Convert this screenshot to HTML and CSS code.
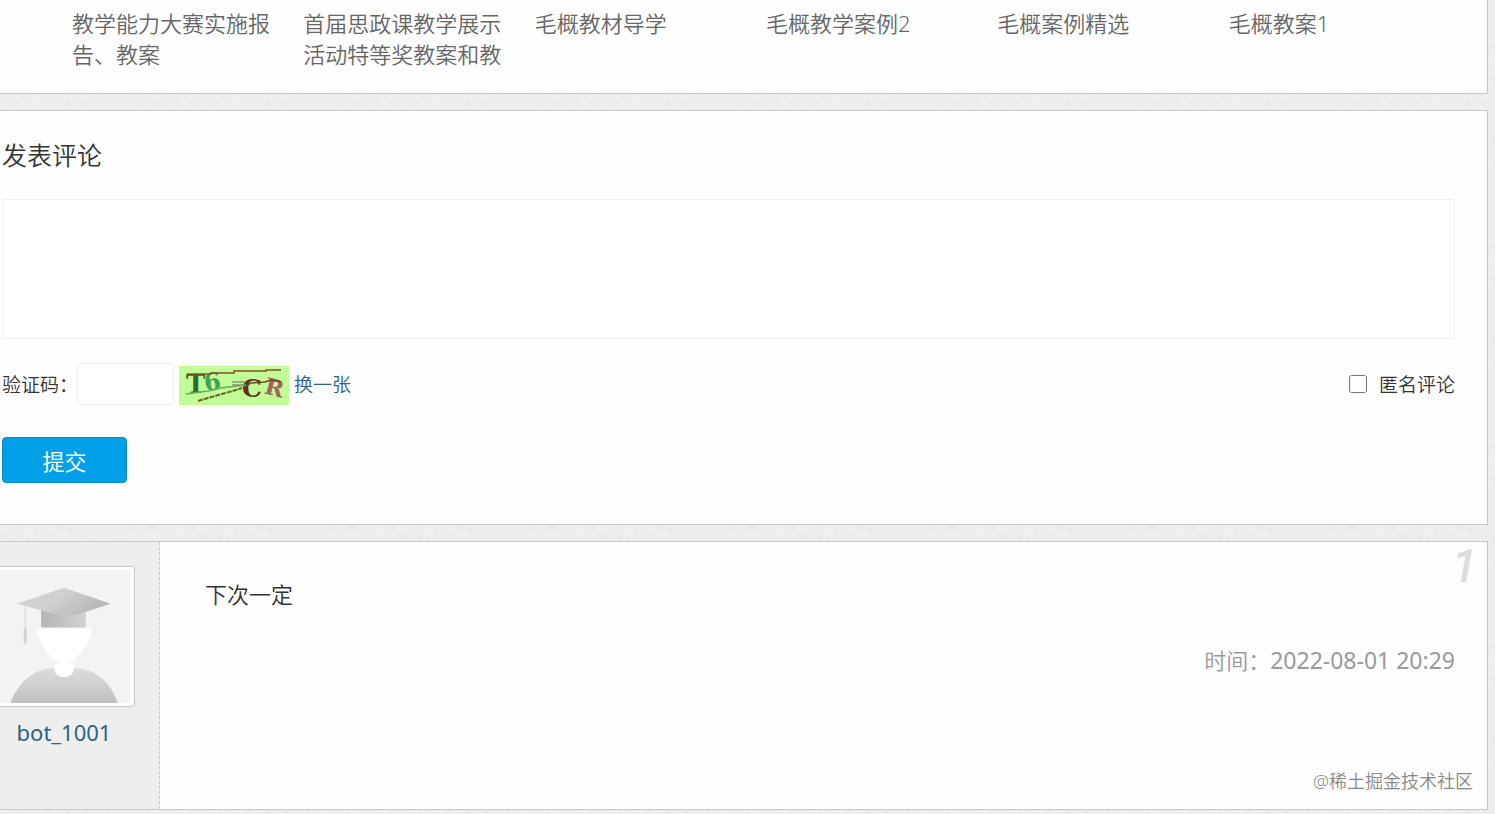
FILE: index.html
```
<!DOCTYPE html>
<html lang="zh-CN">
<head>
  <meta charset="UTF-8">
  <meta name="viewport" content="width=device-width, initial-scale=1.0">
  <title>发表评论</title>
  <link rel="stylesheet" href="styles.css">
</head>
<body>
  <section class="panel related">
    <a href="#">教学能力大赛实施报告、教案</a>
    <a href="#">首届思政课教学展示活动特等奖教案和教</a>
    <a href="#">毛概教材导学</a>
    <a href="#">毛概教学案例2</a>
    <a href="#">毛概案例精选</a>
    <a href="#">毛概教案1</a>
  </section>

  <form class="panel comment-form">
    <h2><label for="content">发表评论</label></h2>
    <textarea id="content" name="content"></textarea>
    <div class="form-row">
      <label for="captcha">验证码：</label>
      <input type="text" class="captcha-input" id="captcha" name="captcha">
      <svg class="captcha" viewBox="0 0 110 39" width="110" height="39">
        <rect width="110" height="39" fill="#c1fc96"/>
        <g font-family="DejaVu Serif, serif" font-weight="bold">
          <text x="7" y="27" font-size="26" fill="#2c6b2b">T</text>
          <text x="25" y="24" font-size="24" fill="#3fa056" transform="rotate(-8 34 16)">6</text>
          <text x="63" y="31" font-size="25" fill="#60301c">C</text>
          <text x="86" y="30" font-size="23" fill="#a4635d" transform="rotate(14 96 22)">R</text>
        </g>
        <g fill="none" stroke-width="1.5">
          <path d="M8 8 L32 8 L32 7 L55 7 L55 5 L87 5 L87 4 L102 4" stroke="#8d4b2c"/>
          <path d="M19 35 L29 32 L43 28 L57 24 L63 22" stroke="#6f6224" stroke-width="2" stroke-dasharray="5 1"/>
          <path d="M65 21 L72 17 L86 16 L92 14 L102 16" stroke="#6f4224"/>
          <path d="M7 28 L29 25 L42 22 L67 19" stroke="#66ad6b"/>
          <path d="M53 16 L67 16 M53 19 L65 19" stroke="#82986b"/>
        </g>
      </svg>
      <a href="#">换一张</a>
      <span class="anonymous">
        <input type="checkbox" id="anonymous" name="anonymous">
        <label for="anonymous">匿名评论</label>
      </span>
    </div>
    <button type="submit">提交</button>
  </form>

  <article class="panel comment">
    <div class="user">
      <svg class="avatar" viewBox="0 0 134 134">
        <defs>
          <linearGradient id="cap" x1="0" y1="0" x2="1" y2="0.4">
            <stop offset="0" stop-color="#d2d2d2"/>
            <stop offset="0.5" stop-color="#d0d0d0"/>
            <stop offset="1" stop-color="#b8b8b8"/>
          </linearGradient>
          <linearGradient id="band" x1="0" y1="0" x2="1" y2="0">
            <stop offset="0" stop-color="#b5b5b5"/>
            <stop offset="1" stop-color="#d2d2d2"/>
          </linearGradient>
          <linearGradient id="gown" x1="0" y1="0" x2="0" y2="1">
            <stop offset="0" stop-color="#dcdcdc"/>
            <stop offset="1" stop-color="#bfc1c0"/>
          </linearGradient>
        </defs>
        <rect width="134" height="134" fill="#f3f3f3"/>
        <path d="M13 134 C20 114 37 99 55 99 H79 C98 99 115 114 121 134 Z" fill="url(#gown)"/>
        <path d="M57 96 Q67 90 77 94 V99 C76 111 58 111 57 99 Z" fill="#fff"/>
        <path d="M41 59 H93 Q97 62 93 69 C89 78 83 84 78 90 Q67 96 56 90 C51 84 45 78 42 69 Q37 62 41 59 Z" fill="#fff"/>
        <path d="M44 39 H89 V58 H44 Z" fill="url(#band)"/>
        <path d="M19 34 L67 18 L114 34 L83 44 Q67 47 54 43 Z" fill="url(#cap)"/>
        <path d="M28 37 V58" stroke="#d8d8d8"/>
        <path d="M28 58 V74" stroke="#d3d3d3" stroke-width="3"/>
      </svg>
      <a href="#">bot_1001</a>
    </div>
    <div class="comment-body">
      <span class="floor">1</span>
      <p>下次一定</p>
      <div class="time">时间：<time datetime="2022-08-01T20:29">2022-08-01 20:29</time></div>
    </div>
    <span class="watermark">@稀土掘金技术社区</span>
  </article>
</body>
</html>
```
FILE: styles.css
```
* {
  box-sizing: border-box;
}

body {
  margin: 0 7px 0 0;
  background-color: #eee;
  background-image: url("data:image/svg+xml,%3Csvg xmlns='http://www.w3.org/2000/svg' width='200' height='200'%3E%3Cfilter id='n'%3E%3CfeTurbulence baseFrequency='.12' numOctaves='2' stitchTiles='stitch'/%3E%3CfeColorMatrix values='0 0 0 0 0 0 0 0 0 0 0 0 0 0 0 .06 0 0 0 -.015'/%3E%3C/filter%3E%3Crect width='200' height='200' filter='url(%23n)'/%3E%3C/svg%3E");
  color: #333;
  font-family: "Noto Sans", "Noto Sans CJK SC", sans-serif;
  font-size: 22px;
  font-weight: 350;
}

a {
  color: #2d6481;
  text-decoration: none;
}

a:hover {
  text-decoration: underline;
}

.panel {
  margin-bottom: 16px;
  background-color: #fefefe;
  border: 1px solid #c8c8c8;
  border-left: none;
}

.related {
  display: grid;
  grid-template-columns: repeat(6, 1fr);
  column-gap: 33px;
  padding: 8px 60px 23px 72px;
  border-top: none;
  line-height: 31px;
}

.related a {
  color: #666;
}

.comment-form {
  padding: 24px 32px 41px 2px;
}

.comment-form h2 {
  margin: 0 0 24px;
  font-size: 25px;
  font-weight: 350;
  line-height: 40px;
}

textarea {
  display: block;
  width: 100%;
  height: 140px;
  margin-bottom: 24px;
  padding: 8px;
  border: 1px solid #f0f0f0;
  border-radius: 2px;
  background-color: #fff;
  font: inherit;
  resize: none;
}

.form-row {
  display: flex;
  align-items: center;
  gap: 5px;
  margin-bottom: 32px;
  font-size: 19px;
}

.form-row > label {
  margin-right: -6px;
}

.captcha-input {
  width: 97px;
  height: 42px;
  padding: 0 8px;
  border: 1px solid #eee;
  border-radius: 4px;
  background-color: #fff;
  font: inherit;
}

.captcha {
  align-self: flex-end;
}

.anonymous {
  display: flex;
  align-items: center;
  gap: 12px;
  margin-left: auto;
}

.anonymous input {
  width: 18px;
  height: 18px;
  margin: 0;
}

button {
  display: block;
  width: 125px;
  height: 46px;
  padding: 0;
  border: 1px solid #0c89c9;
  border-radius: 4px;
  background-color: #00a0e9;
  color: #fff;
  font: inherit;
  font-weight: 400;
  cursor: pointer;
}

button:hover {
  background-color: #0c89c9;
}

.comment {
  position: relative;
  display: flex;
  min-height: 269px;
}

.user {
  display: flex;
  flex-direction: column;
  align-items: center;
  width: 160px;
  padding: 24px 31px 0 0;
  overflow: hidden;
  border-right: 1px dashed #c8c8c8;
  background-color: #eee;
  line-height: 36px;
}

.user a {
  margin-top: 7px;
  font-weight: 400;
}

.avatar {
  flex: none;
  width: 142px;
  height: 141px;
  padding: 3px;
  border: 1px solid #c8c8c8;
  border-radius: 3px;
  background-color: #fff;
}

.comment-body {
  flex: 1;
  padding: 34px 32px 0 45px;
  line-height: 36px;
}

.comment-body p {
  margin: 0 0 30px;
}

.time {
  color: #999;
  text-align: right;
}

.time time {
  font-size: 23px;
  font-weight: 400;
}

.floor {
  position: absolute;
  top: 0;
  right: 10px;
  color: #ddd;
  font-family: Roboto, sans-serif;
  font-size: 46px;
  font-style: italic;
  font-weight: 500;
  line-height: 48px;
}

.watermark {
  position: absolute;
  right: 14px;
  bottom: 15px;
  color: #888;
  font-size: 18px;
  line-height: 26px;
}
```
